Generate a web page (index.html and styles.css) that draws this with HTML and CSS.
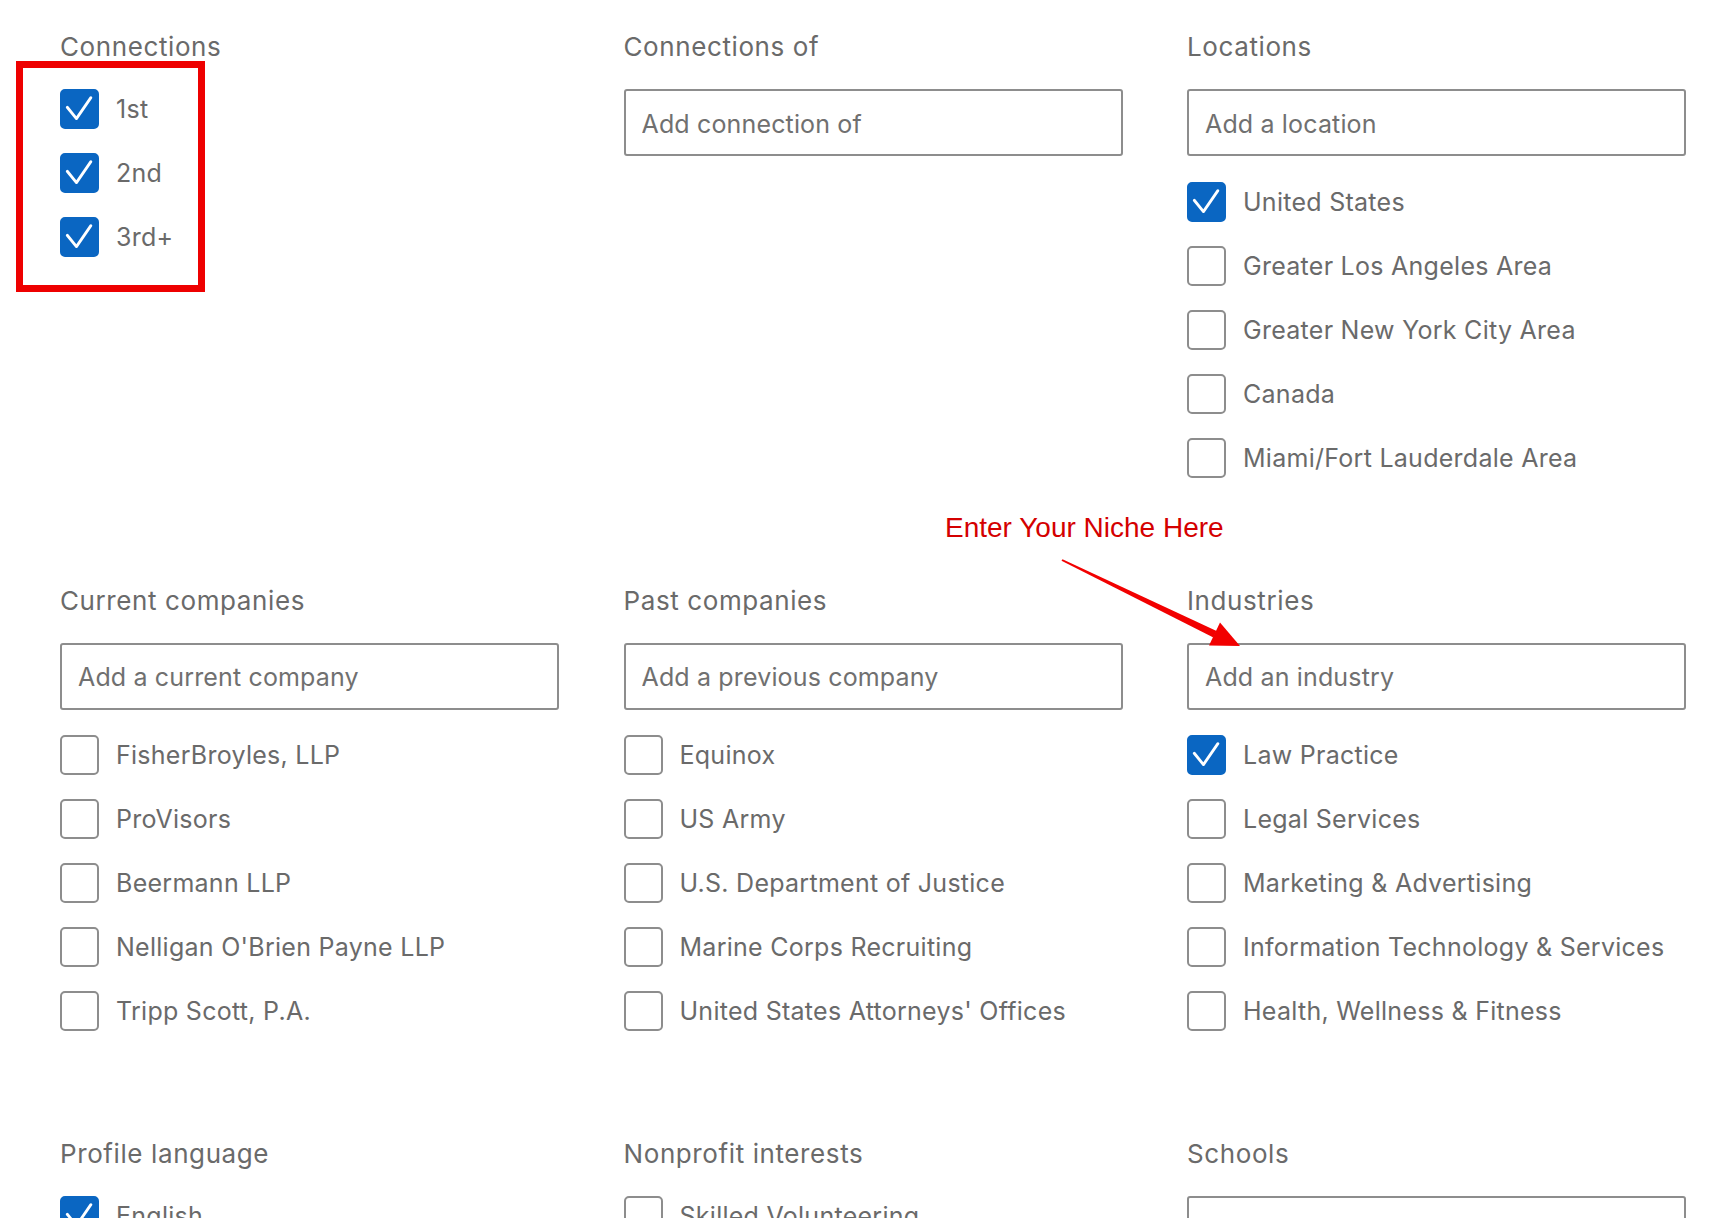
FILE: index.html
```html
<!DOCTYPE html>
<html>
<head>
    <meta charset="UTF-8">
    <title>All filters</title>
    <link rel="stylesheet" href="styles.css">
</head>
<body>
    <div class="page">
        <div class="filters">
            <div class="filter">
                <h3>Connections</h3>
                <div class="options">
                    <label class="option"><span class="box checked"><svg viewBox="0 0 40 40"><path d="M6 18 L16.5 31 L33 7"/></svg></span>1st</label>
                    <label class="option"><span class="box checked"><svg viewBox="0 0 40 40"><path d="M6 18 L16.5 31 L33 7"/></svg></span>2nd</label>
                    <label class="option"><span class="box checked"><svg viewBox="0 0 40 40"><path d="M6 18 L16.5 31 L33 7"/></svg></span>3rd+</label>
                </div>
            </div>

            <div class="filter">
                <h3>Connections of</h3>
                <input class="search" type="text" placeholder="Add connection of">
            </div>

            <div class="filter">
                <h3>Locations</h3>
                <input class="search" type="text" placeholder="Add a location">
                <div class="options">
                    <label class="option"><span class="box checked"><svg viewBox="0 0 40 40"><path d="M6 18 L16.5 31 L33 7"/></svg></span>United States</label>
                    <label class="option"><span class="box"></span>Greater Los Angeles Area</label>
                    <label class="option"><span class="box"></span>Greater New York City Area</label>
                    <label class="option"><span class="box"></span>Canada</label>
                    <label class="option"><span class="box"></span>Miami/Fort Lauderdale Area</label>
                </div>
            </div>

            <div class="filter">
                <h3>Current companies</h3>
                <input class="search" type="text" placeholder="Add a current company">
                <div class="options">
                    <label class="option"><span class="box"></span>FisherBroyles, LLP</label>
                    <label class="option"><span class="box"></span>ProVisors</label>
                    <label class="option"><span class="box"></span>Beermann LLP</label>
                    <label class="option"><span class="box"></span>Nelligan O'Brien Payne LLP</label>
                    <label class="option"><span class="box"></span>Tripp Scott, P.A.</label>
                </div>
            </div>

            <div class="filter">
                <h3>Past companies</h3>
                <input class="search" type="text" placeholder="Add a previous company">
                <div class="options">
                    <label class="option"><span class="box"></span>Equinox</label>
                    <label class="option"><span class="box"></span>US Army</label>
                    <label class="option"><span class="box"></span>U.S. Department of Justice</label>
                    <label class="option"><span class="box"></span>Marine Corps Recruiting</label>
                    <label class="option"><span class="box"></span>United States Attorneys' Offices</label>
                </div>
            </div>

            <div class="filter">
                <h3>Industries</h3>
                <input class="search" type="text" placeholder="Add an industry">
                <div class="options">
                    <label class="option"><span class="box checked"><svg viewBox="0 0 40 40"><path d="M6 18 L16.5 31 L33 7"/></svg></span>Law Practice</label>
                    <label class="option"><span class="box"></span>Legal Services</label>
                    <label class="option"><span class="box"></span>Marketing &amp; Advertising</label>
                    <label class="option"><span class="box"></span>Information Technology &amp; Services</label>
                    <label class="option"><span class="box"></span>Health, Wellness &amp; Fitness</label>
                </div>
            </div>

            <div class="filter">
                <h3>Profile language</h3>
                <div class="options">
                    <label class="option"><span class="box checked"><svg viewBox="0 0 40 40"><path d="M6 18 L16.5 31 L33 7"/></svg></span>English</label>
                    <label class="option"><span class="box"></span>Spanish</label>
                </div>
            </div>

            <div class="filter">
                <h3>Nonprofit interests</h3>
                <div class="options">
                    <label class="option"><span class="box"></span>Skilled Volunteering</label>
                    <label class="option"><span class="box"></span>Board Service</label>
                </div>
            </div>

            <div class="filter">
                <h3>Schools</h3>
                <input class="search" type="text" placeholder="Add a school">
            </div>
        </div>

        <!-- annotations drawn over the screenshot -->
        <div class="highlight"></div>
        <div class="note">Enter Your Niche Here</div>
        <svg class="arrow" width="1730" height="1218" viewBox="0 0 1730 1218">
            <polygon points="1061.5,560.8 1062.5,559.2 1216.6,631 1213.4,637.4" />
            <polygon points="1220,622.5 1240,646 1209,645.5" />
        </svg>
    </div>
</body>
</html>
```

FILE: styles.css
```css
html, body {
    margin: 0;
    padding: 0;
    overflow: hidden;
    background-color: #fff;
}
body {
    font-family: Inter, "Open Sans", sans-serif;
    color: #666;
}
.page {
    position: relative;
    width: 1730px;
    height: 1218px;
}
.filters {
    display: grid;
    grid-template-columns: repeat(3, 499px);
    column-gap: 64.5px;
    row-gap: 108px;
    padding: 32.4px 0 0 60px;
    align-items: start;
}
.filter h3 {
    margin: 0 0 27px;
    font-size: 26px;
    font-weight: 400;
    line-height: 30px;
    letter-spacing: 0.6px;
    color: #6a6a6a;
}
.search {
    display: block;
    box-sizing: border-box;
    width: 100%;
    height: 67px;
    margin: 0;
    padding: 2px 16px 0;
    border: 2px solid #8d8d8d;
    border-radius: 3px;
    font-family: inherit;
    font-size: 25px;
    letter-spacing: 0.15px;
    color: #666;
    background-color: #fff;
    outline: none;
}
.search::placeholder {
    color: #707070;
}
.search + .options {
    margin-top: 25.5px;
}
.options {
    display: flex;
    flex-direction: column;
    gap: 24px;
}
.option {
    display: flex;
    align-items: center;
    gap: 17px;
    height: 40px;
    line-height: 42px;
    font-size: 25px;
    letter-spacing: 0.27px;
    color: #6a6a6a;
    white-space: nowrap;
}
.box {
    box-sizing: border-box;
    flex: 0 0 39px;
    width: 39px;
    height: 40px;
    border: 2px solid #8d8d8d;
    border-radius: 5px;
    background-color: #fff;
}
.box.checked {
    border-color: #0a66c2;
    background-color: #0a66c2;
}
.box svg {
    display: block;
    width: 35px;
    height: 36px;
}
.box svg path {
    fill: none;
    stroke: #fff;
    stroke-width: 3.2;
    stroke-linecap: round;
    stroke-linejoin: round;
}
.highlight {
    position: absolute;
    left: 16px;
    top: 61px;
    width: 189px;
    height: 231px;
    box-sizing: border-box;
    border: 7.5px solid #ee0000;
}
.note {
    position: absolute;
    left: 945px;
    top: 514px;
    font-family: "Liberation Sans", Arial, sans-serif;
    font-size: 28px;
    line-height: 28px;
    color: #d40000;
    white-space: nowrap;
}
.arrow {
    position: absolute;
    left: 0;
    top: 0;
    pointer-events: none;
}
.arrow polygon {
    fill: #f20000;
}
```
